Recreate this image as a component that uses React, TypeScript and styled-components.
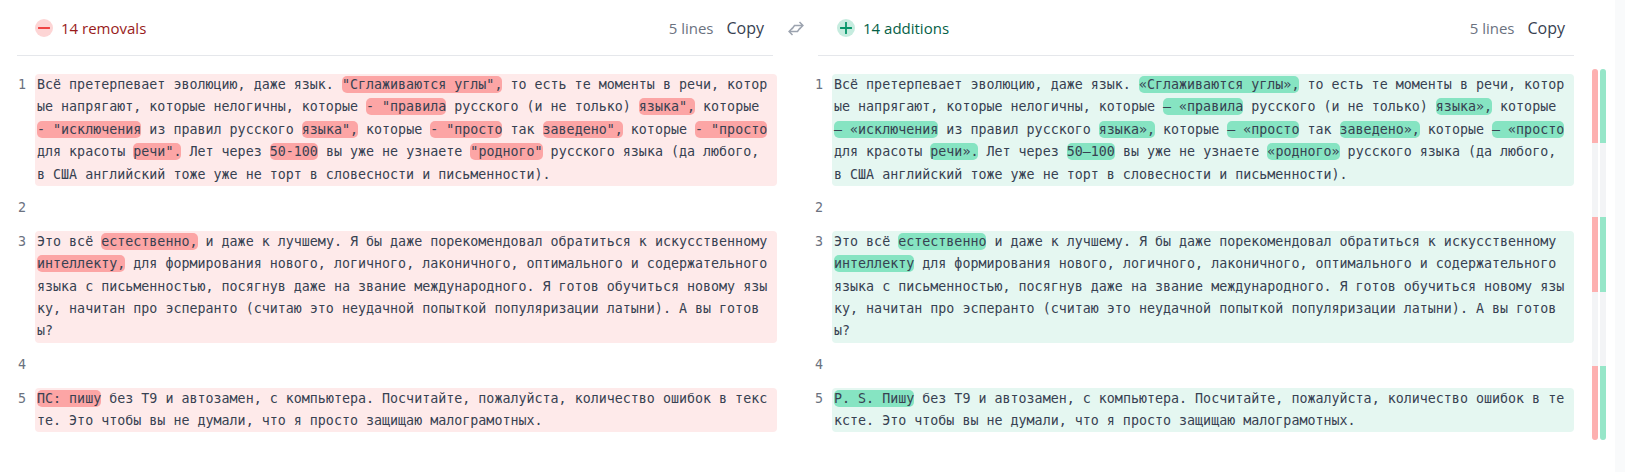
import React from "react";
import styled, { createGlobalStyle } from "styled-components";

const Global = createGlobalStyle`
  html, body { margin: 0; padding: 0; background: #fff; }
  body { font-family: "Open Sans", "Noto Sans", sans-serif; }
  * { box-sizing: border-box; }
`;

const Page = styled.div`
  display: flex;
  width: 1625px;
  height: 472px;
  overflow: hidden;
  background: #fff;
`;

const Main = styled.div`
  display: flex;
  padding-left: 17px;
`;

const Pane = styled.section`
  width: 756px;
`;

const Header = styled.header<{ $side: Side }>`
  display: flex;
  align-items: center;
  height: 56px;
  padding: 0 9px 0 ${(p) => (p.$side === "left" ? "18px" : "19px")};
  border-bottom: 1px solid #e5e7eb;
`;

const Badge = styled.span<{ $side: Side }>`
  flex: none;
  display: flex;
  align-items: center;
  justify-content: center;
  width: 18px;
  height: 18px;
  border-radius: 50%;
  margin-right: 8px;
  background: ${(p) => (p.$side === "left" ? "#fdd5d5" : "#c6ecdf")};
`;

const Count = styled.span<{ $side: Side }>`
  flex: 1;
  font-size: 15px;
  font-weight: 500;
  color: ${(p) => (p.$side === "left" ? "#991b1b" : "#065f46")};
`;

const Lines = styled.span`
  font-size: 15px;
  font-weight: 500;
  color: #6b7280;
  margin-right: 13px;
`;

const Copy = styled.button`
  border: 0;
  padding: 0;
  background: none;
  font: 500 16px "Open Sans", "Noto Sans", sans-serif;
  color: #374151;
`;

const Swap = styled.div`
  flex: none;
  width: 45px;
  height: 56px;
  display: flex;
  align-items: center;
  justify-content: center;
  color: #9ca3af;
`;

const Body = styled.div<{ $side: Side }>`
  padding-top: 18px;
  width: 760px;
  margin-left: ${(p) => (p.$side === "left" ? "0" : "-4px")};
  font-family: "DejaVu Sans Mono", monospace;
  font-size: 13.333px;
  line-height: 22.4px;
`;

const Row = styled.div`
  display: grid;
  grid-template-columns: 18px 1fr;
`;

const Num = styled.span`
  color: #6b7280;
  padding-left: 1px;
  align-self: center;
`;

const NumTop = styled(Num)`
  align-self: start;
`;

const Code = styled.div<{ $side: Side }>`
  padding: 0 9px 0 2px;
  border-radius: 4px;
  color: #374151;
  white-space: pre-wrap;
  word-break: break-all;
  background: ${(p) => (p.$side === "left" ? "#feeaea" : "#e5f7f1")};
`;

const Empty = styled.div`
  height: 44.8px;
`;

const Mark = styled.span<{ $side: Side }>`
  padding: 1px 0;
  border-radius: 5px;
  background: ${(p) => (p.$side === "left" ? "#fca5a5" : "#86e4c2")};
`;

const Overview = styled.div`
  flex: none;
  display: flex;
  gap: 2px;
  margin-left: 18px;
  padding-top: 69px;
`;

const Track = styled.div`
  width: 6px;
  height: 371px;
  display: flex;
  flex-direction: column;
  border-radius: 3px;
  overflow: hidden;
  background: #f3f4f6;
`;

const Segment = styled.div<{ $side: Side; $on: boolean }>`
  flex: 1;
  background: ${(p) =>
    !p.$on ? "transparent" : p.$side === "left" ? "#fdb0b0" : "#96e6c8"};
`;

const Gutter = styled.div`
  flex: none;
  width: 10px;
  margin-left: 9px;
  background: #f9fafb;
`;

type Side = "left" | "right";
type Part = string | { m: string };

const m = (s: string): Part => ({ m: s });

const leftRows: Part[][] = [
  [
    "Всё претерпевает эволюцию, даже язык. ", m('"Сглаживаются углы",'),
    " то есть те моменты в речи, которые напрягают, которые нелогичны, которые ",
    m('- "правила'), " русского (и не только) ", m('языка",'), " которые ",
    m('- "исключения'), " из правил русского ", m('языка",'), " которые ",
    m('- "просто'), " так ", m('заведено",'), " которые ", m('- "просто'),
    " для красоты ", m('речи".'), " Лет через ", m("50-100"),
    " вы уже не узнаете ", m('"родного"'),
    " русского языка (да любого, в США английский тоже уже не торт в словесности и письменности).",
  ],
  [],
  [
    "Это всё ", m("естественно,"),
    " и даже к лучшему. Я бы даже порекомендовал обратиться к искусственному ",
    m("интеллекту,"),
    " для формирования нового, логичного, лаконичного, оптимального и содержательного языка с письменностью, посягнув даже на звание международного. Я готов обучиться новому языку, начитан про эсперанто (считаю это неудачной попыткой популяризации латыни). А вы готовы?",
  ],
  [],
  [
    m("ПС: пишу"),
    " без Т9 и автозамен, с компьютера. Посчитайте, пожалуйста, количество ошибок в тексте. Это чтобы вы не думали, что я просто защищаю малограмотных.",
  ],
];

const rightRows: Part[][] = [
  [
    "Всё претерпевает эволюцию, даже язык. ", m("«Сглаживаются углы»,"),
    " то есть те моменты в речи, которые напрягают, которые нелогичны, которые ",
    m("— «правила"), " русского (и не только) ", m("языка»,"), " которые ",
    m("— «исключения"), " из правил русского ", m("языка»,"), " которые ",
    m("— «просто"), " так ", m("заведено»,"), " которые ", m("— «просто"),
    " для красоты ", m("речи»."), " Лет через ", m("50—100"),
    " вы уже не узнаете ", m("«родного»"),
    " русского языка (да любого, в США английский тоже уже не торт в словесности и письменности).",
  ],
  [],
  [
    "Это всё ", m("естественно"),
    " и даже к лучшему. Я бы даже порекомендовал обратиться к искусственному ",
    m("интеллекту"),
    " для формирования нового, логичного, лаконичного, оптимального и содержательного языка с письменностью, посягнув даже на звание международного. Я готов обучиться новому языку, начитан про эсперанто (считаю это неудачной попыткой популяризации латыни). А вы готовы?",
  ],
  [],
  [
    m("P. S. Пишу"),
    " без Т9 и автозамен, с компьютера. Посчитайте, пожалуйста, количество ошибок в тексте. Это чтобы вы не думали, что я просто защищаю малограмотных.",
  ],
];

const MinusIcon = () => (
  <svg width="12" height="12" viewBox="0 0 12 12" fill="none">
    <path d="M0.5 6h11" stroke="#ef4444" strokeWidth="1.8" strokeLinecap="round" />
  </svg>
);

const PlusIcon = () => (
  <svg width="12" height="12" viewBox="0 0 12 12" fill="none">
    <path d="M0.5 6h11M6 .5v11" stroke="#059669" strokeWidth="1.8" strokeLinecap="round" />
  </svg>
);

const SwapIcon = () => (
  <svg width="16" height="15" viewBox="0 0 16 15" fill="none" stroke="currentColor" strokeWidth="1.5">
    <path d="M15 4.5H6.5L4 8M11.5 1l3.4 3.5-3.4 3.5" />
    <path d="M1 10.5h8.5L12 7M4.5 14l-3.4-3.5L4.5 7" />
  </svg>
);

const PaneView = ({ side, rows, label }: { side: Side; rows: Part[][]; label: string }) => (
  <Pane>
    <Header $side={side}>
      <Badge $side={side}>{side === "left" ? <MinusIcon /> : <PlusIcon />}</Badge>
      <Count $side={side}>{label}</Count>
      <Lines>5 lines</Lines>
      <Copy>Copy</Copy>
    </Header>
    <Body $side={side}>
      {rows.map((parts, i) =>
        parts.length ? (
          <Row key={i}>
            <NumTop>{i + 1}</NumTop>
            <Code $side={side}>
              {parts.map((p, j) =>
                typeof p === "string" ? p : <Mark key={j} $side={side}>{p.m}</Mark>
              )}
            </Code>
          </Row>
        ) : (
          <Row key={i}>
            <Num>{i + 1}</Num>
            <Empty />
          </Row>
        )
      )}
    </Body>
  </Pane>
);

const OverviewTrack = ({ side }: { side: Side }) => (
  <Track>
    {[true, false, true, false, true].map((on, i) => (
      <Segment key={i} $side={side} $on={on} />
    ))}
  </Track>
);

export default function App() {
  return (
    <Page>
      <Global />
      <Main>
        <PaneView side="left" rows={leftRows} label="14 removals" />
        <Swap><SwapIcon /></Swap>
        <PaneView side="right" rows={rightRows} label="14 additions" />
      </Main>
      <Overview>
        <OverviewTrack side="left" />
        <OverviewTrack side="right" />
      </Overview>
      <Gutter />
    </Page>
  );
}
